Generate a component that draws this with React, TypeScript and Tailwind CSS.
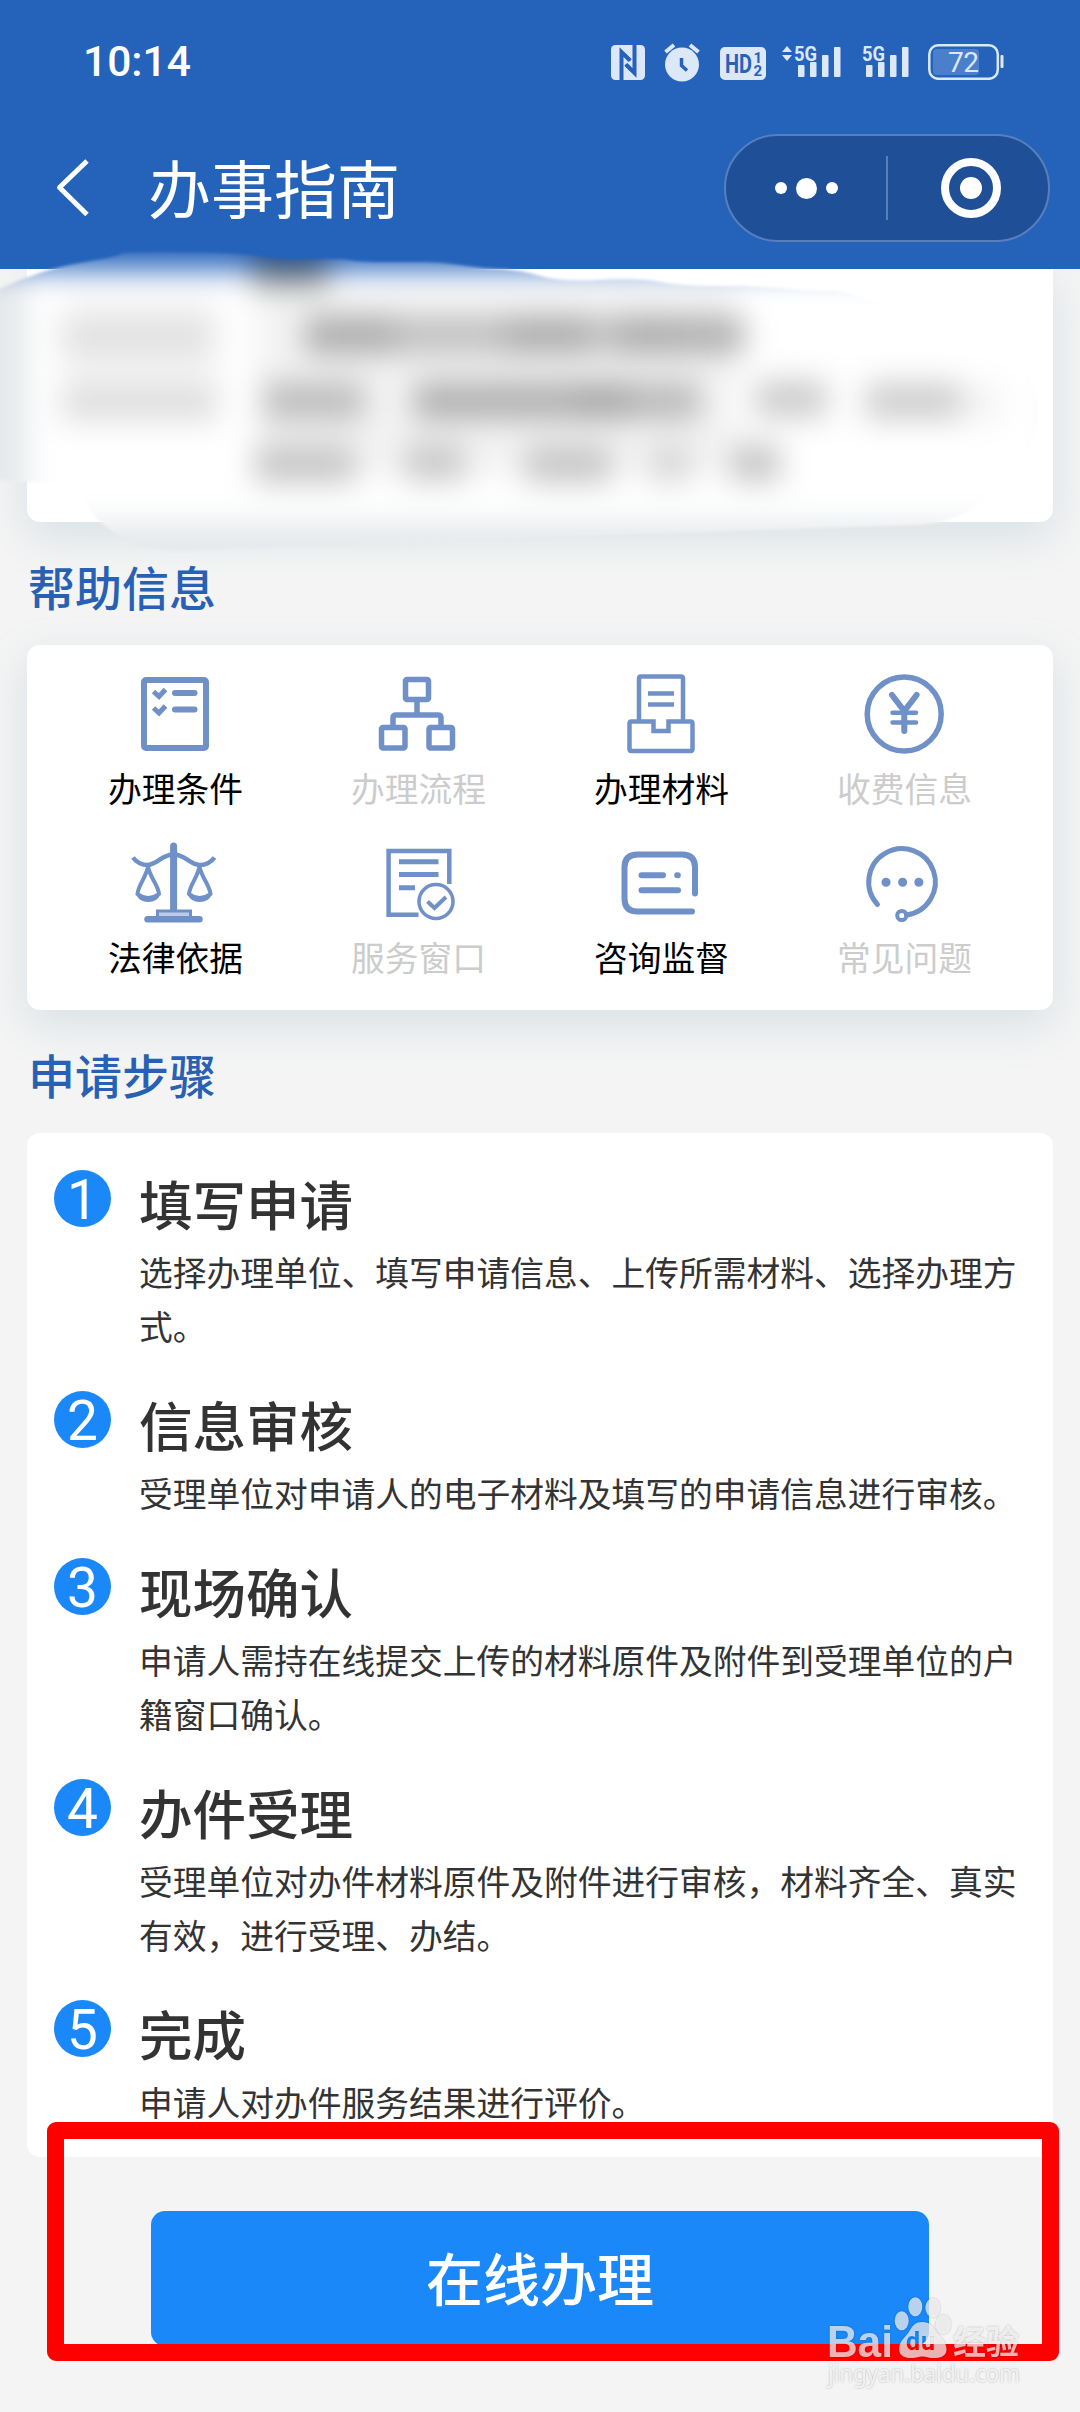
import type { ReactNode } from "react";

const helpItems: { label: string; disabled?: boolean; icon: ReactNode }[] = [
  {
    label: "办理条件",
    icon: (
      <>
        <rect x="9" y="7" width="62" height="68" rx="2" strokeWidth="6" />
        <path d="M18.5 18.5l5.5 5 6.5-7M18.5 35l5.5 5 6.5-7" strokeWidth="5" />
        <path d="M40 20h19.500M40 36.500h19.500" strokeWidth="6" strokeLinecap="round" />
      </>
    ),
  },
  {
    label: "办理流程",
    disabled: true,
    icon: (
      <g strokeWidth="5.500">
        <rect x="27.500" y="6.500" width="23" height="20" rx="1.500" />
        <rect x="3.500" y="54.500" width="23.500" height="20.500" rx="1.500" />
        <rect x="51" y="54.500" width="23.500" height="20.500" rx="1.500" />
        <path d="M39 27v15M15 54V45q0-3 3-3h42q3 0 3 3v9" />
      </g>
    ),
  },
  {
    label: "办理材料",
    icon: (
      <g strokeWidth="4.500">
        <path d="M18 47V5.500q0-2 2-2h40q2 0 2 2V47M27 20.500h26M27 31.500h26" />
        <path d="M10.500 48.500h22V58h15v-9.500h22q2 0 2 2V76q0 2-2 2h-59q-2 0-2-2V50.500q0-2 2-2z" />
      </g>
    ),
  },
  {
    label: "收费信息",
    disabled: true,
    icon: (
      <>
        <circle cx="40.200" cy="41" r="37" strokeWidth="5.500" />
        <path d="M28 22l12.300 16 12.300-16M40.300 38v20" strokeWidth="6" strokeLinecap="round" />
        <path d="M28.500 39.700h23.500M28.500 49.400h23.500" strokeWidth="4.500" strokeLinecap="round" />
      </>
    ),
  },
  {
    label: "法律依据",
    icon: (
      <>
        <path d="M38.600 4v64" strokeWidth="7" strokeLinecap="round" />
        <path
          d="M-2 15.500C2 21 7 23 13 23 23 22 27 12.500 38.600 12.500S54 22 64.500 23c6 0 11-2 15-7.500"
          strokeWidth="4.500"
        />
        <path
          d="M13 25C10.500 36 3 44 2.500 52q10.500 8 21.500 0C23.500 44 15.500 36 13 25zM64.500 25C62 36 54.500 44 54 52q10.500 8 21.500 0C75 44 67 36 64.500 25z"
          strokeWidth="4"
        />
        <path
          d="M1 52q12 4.500 24.500 0-3 8-12.200 8T1 52zM52.500 52q12 4.500 24.500 0-3 8-12.200 8T52.500 52z"
          fill="#7090c8"
          stroke="none"
        />
        <rect x="22.500" y="69" width="33" height="7" fill="#bccbea" strokeWidth="3" />
        <path d="M12.500 77.300h52" strokeWidth="6.500" strokeLinecap="round" />
      </>
    ),
  },
  {
    label: "服务窗口",
    disabled: true,
    icon: (
      <>
        <path d="M71.300 42V9H10.600v63.700H40.500" strokeWidth="4.500" />
        <path d="M21 19.700h39.500M21 32.500h39.500M21 45.700h16" strokeWidth="5" />
        <circle cx="58" cy="59.500" r="17" strokeWidth="3.500" />
        <path d="M49.500 59.500l7 6.500 11.500-11" strokeWidth="4" />
      </>
    ),
  },
  {
    label: "咨询监督",
    icon: (
      <g strokeWidth="6" strokeLinecap="round">
        <path d="M74 51.500V25.500q0-13-13-13H16.500q-13 0-13 13V56.500q0 13 13 13H71" />
        <path d="M20.500 33.300h21.500M20.500 48.300H57M56.200 33.300h.6" />
      </g>
    ),
  },
  {
    label: "常见问题",
    disabled: true,
    icon: (
      <>
        <path d="M13.500 62.500A33.300 33.300 0 1 1 42.500 73" strokeWidth="5" strokeLinecap="round" />
        <circle cx="37.800" cy="73.500" r="4.600" strokeWidth="4" />
        <path d="M22 40.300h.1M38.600 40.300h.1M54.800 40.300h.1" strokeWidth="9" strokeLinecap="round" />
      </>
    ),
  },
];

const steps = [
  { title: "填写申请", desc: "选择办理单位、填写申请信息、上传所需材料、选择办理方式。" },
  { title: "信息审核", desc: "受理单位对申请人的电子材料及填写的申请信息进行审核。" },
  { title: "现场确认", desc: "申请人需持在线提交上传的材料原件及附件到受理单位的户籍窗口确认。" },
  { title: "办件受理", desc: "受理单位对办件材料原件及附件进行审核，材料齐全、真实有效，进行受理、办结。" },
  { title: "完成", desc: "申请人对办件服务结果进行评价。" },
];

// x, y, width, opacity of each smeared run of text
const smears = [
  [62, 318, 150, 0.09],
  [62, 384, 155, 0.1],
  [252, 250, 76, 0.42],
  [305, 316, 90, 0.31],
  [395, 316, 110, 0.22],
  [505, 316, 85, 0.31],
  [590, 316, 25, 0.2],
  [615, 316, 65, 0.31],
  [680, 316, 65, 0.29],
  [264, 382, 100, 0.24],
  [414, 382, 160, 0.29],
  [574, 382, 56, 0.33],
  [630, 382, 70, 0.25],
  [755, 380, 72, 0.21],
  [865, 382, 95, 0.2],
  [960, 384, 40, 0.05],
  [255, 446, 100, 0.2],
  [405, 444, 60, 0.19],
  [525, 446, 86, 0.2],
  [650, 446, 40, 0.13],
  [732, 444, 48, 0.24],
];

function Signal({ arrows }: { arrows?: boolean }) {
  return (
    <svg width="60" height="36" viewBox="0 0 60 36" className="block overflow-visible" fill="#dce7f8">
      {arrows && <path d="M0 8l5-6 5 6zM0 11h10l-5 6z" />}
      <text
        x="12"
        y="16.500"
        fontSize="20.500"
        fontWeight="700"
        textLength="23"
        lengthAdjust="spacingAndGlyphs"
        className="font-['Roboto',sans-serif]"
      >
        5G
      </text>
      <rect x="16" y="21" width="6.500" height="12" rx="1" />
      <rect x="28" y="18" width="6.500" height="15" rx="1" />
      <rect x="40" y="11" width="6.500" height="22" rx="1" />
      <rect x="52" y="3" width="6.500" height="30" rx="1" />
    </svg>
  );
}

function StatusBar() {
  return (
    <div className="flex h-[124px] items-center justify-between pr-[76px] pl-[83px]">
      <span className="font-['Roboto',sans-serif] text-[42.500px] leading-none font-medium text-white">10:14</span>
      <div className="flex items-center">
        <svg width="34" height="35" viewBox="0 0 34 35" className="mr-[19px]">
          <rect width="34" height="35" rx="4.500" fill="#dce7f8" />
          <path d="M10.500 35V7L19 15.500M23.500 0v28L15 19.500" fill="none" stroke="#2563bb" strokeWidth="4" />
          <path d="M13.500 9.500l6 6M20.500 25.500l-6-6" fill="none" stroke="#2563bb" strokeWidth="3" />
        </svg>
        <svg width="36" height="39" viewBox="0 0 36 39" className="mr-[20px]">
          <circle cx="18" cy="21.500" r="17" fill="#dce7f8" />
          <path d="M1.500 9L10 2M34.500 9L26 2" stroke="#dce7f8" strokeWidth="4" />
          <path d="M17.500 15v7.500l5.500 5" fill="none" stroke="#2563bb" strokeWidth="3.500" />
        </svg>
        <svg width="46" height="33" viewBox="0 0 46 33" className="mt-[3px] mr-[16px]">
          <rect width="46" height="33" rx="5" fill="#dce7f8" />
          <g fill="#2563bb" fontWeight="700" className="font-['Roboto',sans-serif]">
            <text x="5" y="25.500" fontSize="25" textLength="27" lengthAdjust="spacingAndGlyphs">
              HD
            </text>
            <text x="33.500" y="15.500" fontSize="15">1</text>
            <text x="33.500" y="28.500" fontSize="15">2</text>
          </g>
        </svg>
        <Signal arrows />
        <div className="ml-[8px]">
          <Signal />
        </div>
        <svg width="76" height="36" viewBox="0 0 76 36" className="ml-[18px]">
          <rect x="5" y="5" width="46" height="26" rx="4" fill="#4a80cb" />
          <rect x="1.300" y="1.300" width="68.500" height="33.500" rx="9" fill="none" stroke="#dce7f8" strokeWidth="2.500" />
          <rect x="72.500" y="11" width="3" height="13" rx="1" fill="#dce7f8" />
          <text x="20" y="28" fontSize="28" textLength="31" fill="#dce7f8" className="font-['Roboto',sans-serif]">
            72
          </text>
        </svg>
      </div>
    </div>
  );
}

function NavBar() {
  return (
    <div className="mt-[10px] flex h-[108px] items-center pr-[30px] pl-[55px]">
      <svg width="34" height="60" viewBox="0 0 34 60" fill="none" stroke="#fff" strokeWidth="5">
        <path d="M32 3L4.500 29.500 32 56.500" strokeLinejoin="round" />
      </svg>
      <h1 className="ml-[59px] flex-1 pb-[6px] text-[63px] leading-none text-white">办事指南</h1>
      <div className="flex h-[108px] w-[326px] items-center rounded-full border-2 border-[#587fbd] bg-[#1f4f96]">
        <div className="flex w-[160px] items-center justify-center gap-[9px]">
          <i className="size-[12px] rounded-full bg-white" />
          <i className="size-[21px] rounded-full bg-white" />
          <i className="size-[12px] rounded-full bg-white" />
        </div>
        <div className="h-[64px] w-[2px] bg-[#587fbd]" />
        <div className="flex flex-1 items-center justify-center pl-[6px]">
          <div className="flex size-[60px] items-center justify-center rounded-full border-[8px] border-white">
            <i className="size-[22px] rounded-full bg-white" />
          </div>
        </div>
      </div>
    </div>
  );
}

function PrivacySmear() {
  return (
    <svg className="absolute top-0 left-0" width="1080" height="570" viewBox="0 0 1080 570">
      <defs>
        <filter id="smear" x="-10%" y="-10%" width="120%" height="120%" colorInterpolationFilters="sRGB">
          <feGaussianBlur stdDeviation="15" />
        </filter>
        <filter id="edge">
          <feGaussianBlur stdDeviation="1.500" />
        </filter>
        <mask id="brush" maskUnits="userSpaceOnUse" x="0" y="0" width="1080" height="570">
          <path
            d="M-10 293Q20 280 40 273T90 261 120 254 160 252 225 253 265 257 310 259 350 260 385 262 425 262 460 265 500 269 540 276 600 280 660 282 720 286 790 289 830 291 860 297 910 308Q1000 330 1020 360 1040 385 1037 425 1030 455 1000 480 975 520 920 525L200 549Q170 552 140 545 95 530 80 490 60 482-10 480z"
            fill="#fff"
            filter="url(#edge)"
          />
        </mask>
      </defs>
      <g mask="url(#brush)">
        <g filter="url(#smear)">
          <rect x="-60" y="200" width="1200" height="400" fill="#e5e9ec" />
          <rect x="27" y="200" width="1026" height="322" fill="#fff" />
          <rect x="60" y="290" width="160" height="130" fill="#111" opacity="0.04" />
          <rect x="255" y="290" width="480" height="185" fill="#111" opacity="0.05" />
          <rect x="-60" y="150" width="1200" height="119" fill="#2563bb" />
          {smears.map(([x, y, width, opacity]) => (
            <rect key={`${x}-${y}`} x={x} y={y} width={width} height="38" fill="#111" opacity={opacity} />
          ))}
        </g>
      </g>
    </svg>
  );
}

function SectionTitle({ children }: { children: ReactNode }) {
  return (
    <h2 className="flex h-[123px] items-center pt-[4px] pl-[28px] text-[47px] leading-none font-medium text-[#2861b3]">
      {children}
    </h2>
  );
}

function Watermark() {
  return (
    <svg
      className="absolute top-[2290px] left-[822px] drop-shadow-[0_0_1px_rgba(0,0,0,0.35)]"
      width="210"
      height="110"
      viewBox="0 0 210 110"
    >
      <mask id="paw" maskUnits="userSpaceOnUse" x="60" y="0" width="80" height="80">
        <path
          d="M100.500 32c7 0 10 4 13 9s11 10 11 18-7 9-13 9-7-1.500-11-1.500-6 1.500-11 1.500-12.500-1-12.500-9 7-12 10.500-18 6-9 13-9z"
          fill="#fff"
        />
        <text x="84" y="60" fontSize="25" fontWeight="700" fill="#000" textLength="29" className="font-['Roboto',sans-serif]">
          du
        </text>
      </mask>
      <g fill="#fff" opacity="0.7">
        <text
          x="5"
          y="66.500"
          fontSize="44"
          fontWeight="700"
          textLength="66"
          lengthAdjust="spacingAndGlyphs"
          className="font-['Liberation_Sans',sans-serif]"
        >
          Bai
        </text>
        <ellipse cx="79.700" cy="30.700" rx="7" ry="9.500" />
        <ellipse cx="93.300" cy="16.700" rx="7" ry="9.500" />
        <ellipse cx="110.700" cy="17.700" rx="7.300" ry="9.500" />
        <ellipse cx="121.300" cy="34.500" rx="7.500" ry="9.500" />
        <rect x="60" y="25" width="80" height="50" mask="url(#paw)" />
        <text x="131" y="63.500" fontSize="33" fontWeight="700">
          经验
        </text>
        <text
          x="6"
          y="92"
          fontSize="24"
          textLength="192"
          lengthAdjust="spacingAndGlyphs"
          className="font-['Noto_Sans',sans-serif]"
        >
          jingyan.baidu.com
        </text>
      </g>
    </svg>
  );
}

export default function App() {
  return (
    <div
      lang="zh-CN"
      className="relative h-[2412px] w-[1080px] overflow-hidden bg-[#f4f4f4] font-['Noto_Sans_CJK_SC',sans-serif]"
    >
      <header className="relative z-10 h-[269px] bg-[#2563bb]">
        <StatusBar />
        <NavBar />
        <PrivacySmear />
      </header>

      <main className="px-[27px]">
        <section className="h-[253px] rounded-b-[13px] bg-white shadow-[0_14px_44px_rgba(130,165,185,0.24)]" />

        <div className="-ml-[27px]">
          <SectionTitle>帮助信息</SectionTitle>
        </div>
        <section className="grid h-[365px] grid-cols-4 content-start gap-y-[40px] rounded-[13px] bg-white px-[27px] pt-[28px] shadow-[0_14px_44px_rgba(130,165,185,0.24)]">
          {helpItems.map((item) => (
            <div key={item.label} className="flex h-[129px] flex-col items-center">
              <svg width="81" height="81" viewBox="0 0 81 81" className="shrink-0 overflow-visible" fill="none" stroke="#7090c8">
                {item.icon}
              </svg>
              <span
                className={`mt-[13px] text-[33.750px] leading-[42px] ${item.disabled ? "text-[#cccccc]" : "text-black"}`}
              >
                {item.label}
              </span>
            </div>
          ))}
        </section>

        <div className="-ml-[27px]">
          <SectionTitle>申请步骤</SectionTitle>
        </div>
        <section className="flex h-[1024px] flex-col gap-[37px] rounded-[13px] bg-white pt-[37px] pr-[27px] pl-[27px]">
          {steps.map((step, i) => (
            <div key={step.title} className="flex">
              <span className="mr-[28px] flex size-[57px] shrink-0 items-center justify-center rounded-full bg-[#1b88f9] pt-[3px] font-['Roboto',sans-serif] text-[55px] leading-none text-white">
                {i + 1}
              </span>
              <div>
                <h3 className="text-[53.500px] leading-[66px] font-medium text-[#333333]">{step.title}</h3>
                <p className="mt-[9px] text-[33.750px] leading-[54px] text-[#333333]">{step.desc}</p>
                <div className="h-px" />
              </div>
            </div>
          ))}
        </section>

        <button className="mx-auto mt-[54px] flex h-[135px] w-[778px] items-center justify-center rounded-[14px] bg-[#1b88f9] pb-[4px] text-[57px] leading-none font-medium text-white">
          在线办理
        </button>
      </main>

      <div className="absolute top-[2122px] left-[47px] h-[239px] w-[1012px] rounded-[9px] border-[17.500px] border-[#ff0000]" />
      <Watermark />
    </div>
  );
}
